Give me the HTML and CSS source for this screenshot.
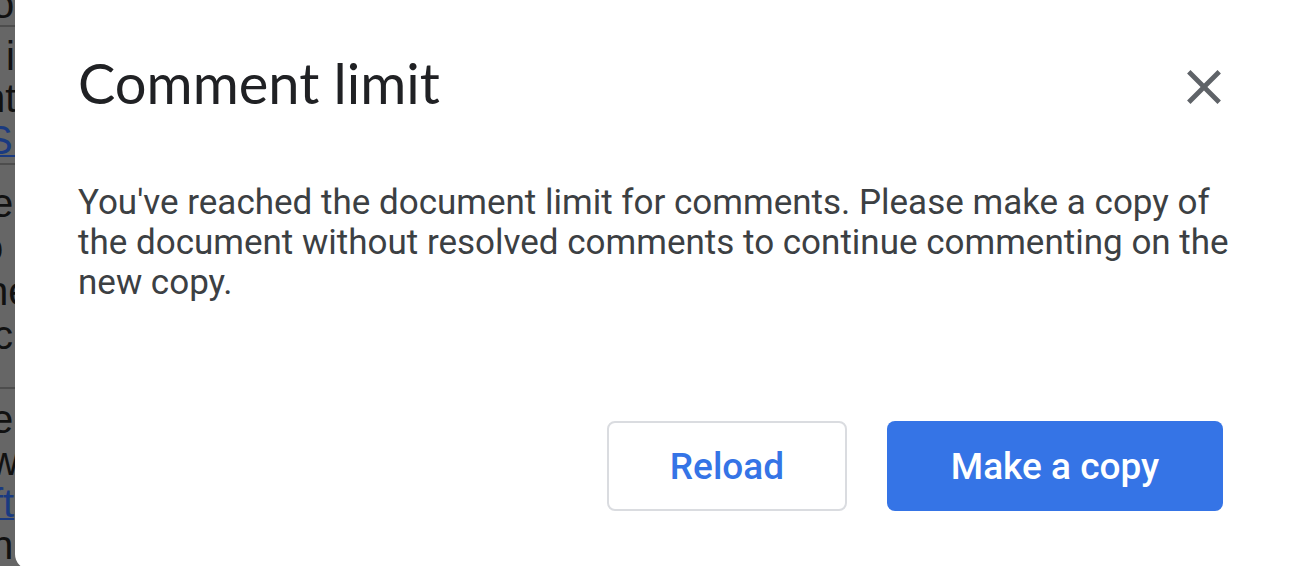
FILE: index.html
```html
<!DOCTYPE html>
<html lang="en">

<head>
    <meta charset="UTF-8">
    <meta name="viewport" content="width=device-width, initial-scale=1.0">
    <title>Comment limit</title>
    <link rel="stylesheet" href="styles.css">
</head>

<body>
    <!-- document behind the dialog, dimmed -->
    <div class="doc">
        <div class="doc-row doc-row-first">
            <div class="ln" style="text-indent:-8px">ob</div>
        </div>
        <div class="doc-row doc-row-a">
            <div class="ln" style="text-indent:6px">it</div>
            <div class="ln" style="text-indent:-17px">nt</div>
            <div class="ln" style="text-indent:-14px"><span class="link">Sh</span></div>
        </div>
        <div class="doc-row doc-row-b">
            <div class="ln" style="text-indent:-9px">e</div>
            <div class="ln" style="text-indent:-19px">o -</div>
            <div class="ln" style="text-indent:-14px">he</div>
            <div class="ln" style="text-indent:-7px">c</div>
        </div>
        <div class="doc-row doc-row-c">
            <div class="ln" style="text-indent:-9px">e</div>
            <div class="ln" style="text-indent:-10px">w</div>
            <div class="ln" style="text-indent:-8px"><span class="link">ft</span></div>
            <div class="ln" style="text-indent:-9px">h</div>
        </div>
    </div>

    <div class="dialog" role="dialog">
        <div class="dialog-head">
            <h1 class="dialog-title">Comment limit</h1>
            <button class="close-btn" aria-label="Close">
                <svg viewBox="0 0 24 24" width="58" height="58">
                    <path fill="#5f6368" d="M19 6.41L17.59 5 12 10.59 6.41 5 5 6.41 10.59 12 5 17.59 6.41 19 12 13.41 17.59 19 19 17.59 13.41 12z"/>
                </svg>
            </button>
        </div>
        <p class="dialog-text">You've reached the document limit for comments. Please make a copy of the document without resolved comments to continue commenting on the new copy.</p>
        <div class="dialog-actions">
            <button class="btn btn-outline">Reload</button>
            <button class="btn btn-primary">Make a copy</button>
        </div>
    </div>
</body>

</html>
```

FILE: styles.css
```css
* {
    margin: 0;
    padding: 0;
    box-sizing: border-box;
}

body {
    position: relative;
    width: 100vw;
    height: 100vh;
    overflow: hidden;
    background: #666;
}

.doc {
    width: 40px;
    height: 100%;
    overflow: hidden;
    background: #666;
    font-family: "Liberation Sans", Arial, sans-serif;
    font-size: 40px;
    line-height: 42px;
    color: #111;
}

.ln {
    white-space: nowrap;
}

.link {
    color: #1a3a80;
    text-decoration: underline;
    text-decoration-thickness: 2px;
}

.doc-row {
    border-bottom: 2px solid #4d4d4d;
}

.doc-row-first {
    margin-top: -17px;
    padding-bottom: 0;
}

.doc-row-a {
    padding-top: 8px;
    padding-bottom: 2px;
}

.doc-row-b {
    padding-top: 16px;
    padding-bottom: 30px;
    line-height: 44px;
}

.doc-row-c {
    padding-top: 9px;
    border-bottom: none;
}

/* dialog */
.dialog {
    position: absolute;
    top: -20px;
    left: 15px;
    right: -20px;
    bottom: -4px;
    background: #fff;
    border-radius: 16px;
    padding: 70px 87px 0 63px;
    display: flex;
    flex-direction: column;
}

.dialog-head {
    display: flex;
    align-items: center;
    justify-content: space-between;
}

.dialog-title {
    font-family: Lato, "Open Sans", sans-serif;
    font-weight: 400;
    font-size: 56px;
    line-height: 66px;
    color: #202124;
}

.close-btn {
    display: flex;
    border: none;
    background: none;
    margin-top: 7px;
    margin-right: -10px;
    cursor: pointer;
}

.dialog-text {
    margin-top: 67px;
    margin-right: -30px;
    font-family: Roboto, "Noto Sans", sans-serif;
    font-size: 35px;
    line-height: 40px;
    color: #3c4043;
}

.dialog-actions {
    margin-top: 118px;
    display: flex;
    justify-content: flex-end;
    gap: 40px;
}

.btn {
    height: 90px;
    border-radius: 8px;
    font-family: Roboto, "Noto Sans", sans-serif;
    font-weight: 500;
    font-size: 37px;
    cursor: pointer;
}

.btn-outline {
    width: 240px;
    background: #fff;
    border: 2px solid #dadce0;
    color: #3574e6;
}

.btn-primary {
    width: 336px;
    background: #3574e6;
    border: none;
    color: #fff;
}
```
